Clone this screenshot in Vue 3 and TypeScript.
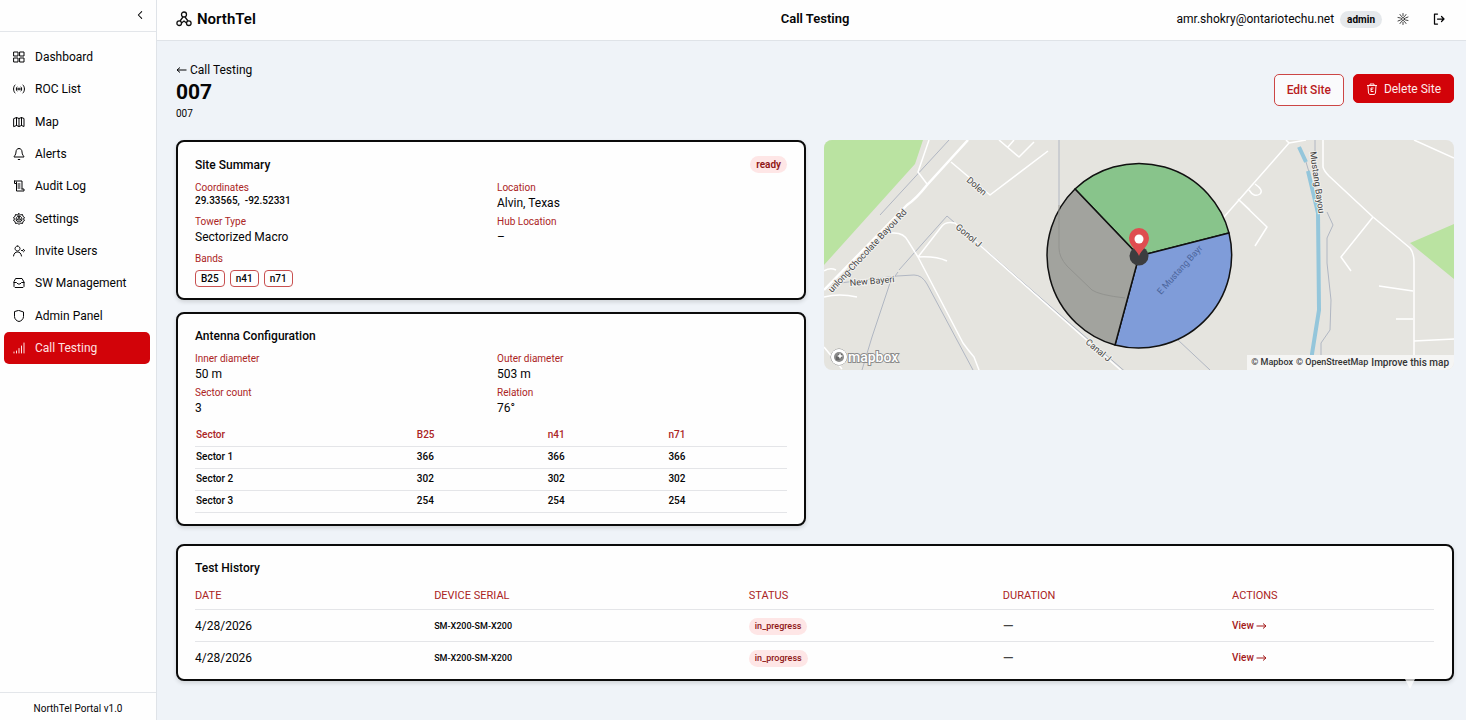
<script setup lang="ts">
interface NavItem {
  label: string
  icon: string
  active?: boolean
}

interface Field {
  label: string
  value: string
  mono?: boolean
}

interface TestRun {
  date: string
  serial: string
  status: string
  duration: string
}

// Icon outlines on a 24-unit grid.
const icons: Record<string, string> = {
  grid: 'M2 2h8v8H2zM14 2h8v8h-8zM2 14h8v8H2zM14 14h8v8h-8z',
  radio: 'M4 4c-4 4-4 12 0 16M20 4c4 4 4 12 0 16M8 8c-2 2-2 6 0 8M16 8c2 2 2 6 0 8M12 10v4M8 12h8',
  map: 'M2 5l5-2 5 2 5-2 5 2v16l-5-2-5 2-5-2-5 2zM7 3v16M12 5v16M17 3v16',
  bell: 'M12 1c-4 0-6 3-6 7 0 6-4 8-4 10h20c0-2-4-4-4-10 0-4-2-7-6-7zM10.500 23h3',
  log: 'M3 2h15v16M3 2v5h4M7 4v18h15v-4h-4M10 8h4M10 12h4M10 16h4',
  gear: 'M12 1l3 3 4-1 1 4 3 2-2 3 2 3-3 2-1 4-4-1-3 3-3-3-4 1-1-4-3-2 2-3-2-3 3-2 1-4 4 1zM12 6a6 6 0 1 0 .1 0M12 9.500a2.500 2.500 0 1 0 .1 0M12 6v3M7 15l3-2M17 15l-3-2',
  user: 'M9 2a5 5 0 1 0 .1 0M1 22c1-6 4-8 8-8s7 2 8 8M21 9a2 2 0 1 0 .1 0M17 11h2',
  drive: 'M6 3h12l4 7v9l-2 2H4l-2-2v-9zM2 11h5l3 3h4l3-3h5',
  shield: 'M12 1l9 3v9c0 5-4 9-9 10-5-1-9-5-9-10V4z',
  signal: 'M2 22v-2M7 22v-4M12 22v-9M17 22V8M22 22V2',
}

const navItems: NavItem[] = [
  { label: 'Dashboard', icon: 'grid' },
  { label: 'ROC List', icon: 'radio' },
  { label: 'Map', icon: 'map' },
  { label: 'Alerts', icon: 'bell' },
  { label: 'Audit Log', icon: 'log' },
  { label: 'Settings', icon: 'gear' },
  { label: 'Invite Users', icon: 'user' },
  { label: 'SW Management', icon: 'drive' },
  { label: 'Admin Panel', icon: 'shield' },
  { label: 'Call Testing', icon: 'signal', active: true },
]

const summary: Field[] = [
  { label: 'Coordinates', value: '29.33565,\u00a0 -92.52331', mono: true },
  { label: 'Location', value: 'Alvin, Texas' },
  { label: 'Tower Type', value: 'Sectorized Macro' },
  { label: 'Hub Location', value: '–' },
]

const antenna: Field[] = [
  { label: 'Inner diameter', value: '50 m' },
  { label: 'Outer diameter', value: '503 m' },
  { label: 'Sector count', value: '3' },
  { label: 'Relation', value: '76°' },
]

const bands: string[] = ['B25', 'n41', 'n71']
const sectors = [
  { name: 'Sector 1', pci: 366 },
  { name: 'Sector 2', pci: 302 },
  { name: 'Sector 3', pci: 254 },
]

const runs: TestRun[] = [
  { date: '4/28/2026', serial: 'SM-X200-SM-X200', status: 'in_pregress', duration: '—' },
  { date: '4/28/2026', serial: 'SM-X200-SM-X200', status: 'in_progress', duration: '—' },
]
</script>

<template>
  <div class="app">
    <aside class="sidebar">
      <div class="sidebar-top">
        <button class="icon-btn collapse" aria-label="Collapse sidebar">
          <svg class="icon" viewBox="0 0 24 24"><path d="M16 4l-8 8 8 8" stroke-width="2.500" /></svg>
        </button>
      </div>
      <nav class="nav" aria-label="Main">
        <a v-for="item in navItems" :key="item.label" href="#" class="nav-link" :class="{ active: item.active }">
          <svg class="icon" viewBox="0 0 24 24" aria-hidden="true"><path :d="icons[item.icon]" /></svg>
          <span>{{ item.label }}</span>
        </a>
      </nav>
      <footer class="sidebar-foot">NorthTel Portal v1.0</footer>
    </aside>

    <div class="page">
      <header class="topbar">
        <div class="brand">
          <svg class="brand-icon" viewBox="0 0 16 16" aria-hidden="true">
            <circle cx="8" cy="3.500" r="2.500" />
            <circle cx="3.200" cy="12.200" r="2.300" />
            <circle cx="12.800" cy="12.200" r="2.300" />
            <path d="M7 6l-3 4M9 6l3 4M5.500 12l2.500-2 2.500 2" />
          </svg>
          <span>NorthTel</span>
        </div>
        <h2 class="topbar-title">Call Testing</h2>
        <div class="account">
          <span class="email">amr.shokry@ontariotechu.net</span>
          <span class="role">admin</span>
          <button class="icon-btn sun" aria-label="Toggle theme">
            <svg class="icon" viewBox="0 0 24 24">
              <circle cx="12" cy="12" r="3" />
              <path d="M12 1v5M12 18v5M2 9l5 1M17 14l5 1M2 16l5-2M17 10l5-2M6 3l3 4M15 17l3 4M18 3l-3 4M9 17l-3 4" />
            </svg>
          </button>
          <button class="icon-btn logout" aria-label="Log out">
            <svg class="icon" viewBox="0 0 24 24"><path d="M9 2H3v20h6M9 12h13M17 7l5 5-5 5" stroke-width="2.500" /></svg>
          </button>
        </div>
      </header>

      <main class="content">
        <div class="page-head">
          <div>
            <a href="#" class="back"><svg class="arrow" viewBox="0 0 11 8" aria-hidden="true"><path d="M10.500 4H1M4 1.500L1 4l3 2.500" /></svg>Call Testing</a>
            <h1>007</h1>
            <p class="site-id">007</p>
          </div>
          <div class="actions">
            <button class="btn outline">Edit Site</button>
            <button class="btn solid">
              <svg class="trash" viewBox="0 0 24 24" aria-hidden="true">
                <path d="M2 5h20M8 5V2h8v3M4 5l1 15 2 3h10l2-3 1-15M15 10h-5v7h5M10 13h3" />
              </svg>
              Delete Site
            </button>
          </div>
        </div>

        <div class="columns">
          <div class="stack">
            <section class="card">
              <div class="card-head">
                <h3>Site Summary</h3>
                <span class="pill">ready</span>
              </div>
              <dl class="fields">
                <div v-for="f in summary" :key="f.label">
                  <dt>{{ f.label }}</dt>
                  <dd :class="{ mono: f.mono }">{{ f.value }}</dd>
                </div>
              </dl>
              <div class="bands">
                <div class="label">Bands</div>
                <div class="chips">
                  <span v-for="b in bands" :key="b" class="chip">{{ b }}</span>
                </div>
              </div>
            </section>

            <section class="card antenna">
              <div class="card-head"><h3>Antenna Configuration</h3></div>
              <dl class="fields">
                <div v-for="f in antenna" :key="f.label">
                  <dt>{{ f.label }}</dt>
                  <dd>{{ f.value }}</dd>
                </div>
              </dl>
              <table class="sectors">
                <thead>
                  <tr>
                    <th>Sector</th>
                    <th v-for="b in bands" :key="b">{{ b }}</th>
                  </tr>
                </thead>
                <tbody>
                  <tr v-for="s in sectors" :key="s.name">
                    <td>{{ s.name }}</td>
                    <td v-for="b in bands" :key="b">{{ s.pci }}</td>
                  </tr>
                </tbody>
              </table>
            </section>
          </div>

          <div class="map">
            <svg class="map-art" viewBox="0 0 630 230" preserveAspectRatio="xMidYMid slice" role="img" aria-label="Site coverage map">
              <rect width="630" height="230" fill="#e5e4df" />
              <path d="M0 0H99L91 24 0 125ZM586 103L630 84V139Z" fill="#bae3a1" />
              <g class="creek">
                <path d="M125 0L56 75M75 130L123 76 360 283M74 132L66 143 48 197 38 230" />
                <path d="M8 144L73 136 90 135Q98 135 103 144L149 230M235 0V65" />
                <path d="M354 200L386 230M482 22L485 32M491 0V12M503 72L509 85 503 98V123L507 160 506 190 497 203V222" />
              </g>
              <g class="road">
                <path d="M105 0L94 32 103 44M127 22L166 55 224 11M175 0L195 17 210 2M184 7L190 0" />
                <path d="M54 93H70Q80 93 84 101L94 117 139 203Q144 210 150 217L155 230" />
                <path d="M94 117L118 86Q122 81 131 83L240 180 300 233M94 117Q112 116 123 121" />
                <path d="M0 131Q6 127 12 130M0 157Q15 153 33 157M0 207L18 229" />
                <path d="M400 77L465 3 482 0M465 3L462 0M415 60L443 87 431 106M414 59L426 70M431 44Q440 50 436 54 430 58 425 50M499 0V27Q500 31 505 36L549 77 586 108Q590 113 590 122V222" />
                <path d="M549 77L517 117 527 131M555 146L589 151M572 179H589M590 201L630 199M590 0L630 18" />
              </g>
              <path d="M144 0L103 45Q92 59 83 65L0 150" class="main-road" />
              <path d="M475 7L482 22M484 31L494 73 495 170 488 214V222" class="river" />
              <g class="coverage">
                <path d="M315 116L251 49A93 93 0 0 1 405 93Z" fill="#88c48b" />
                <path d="M315 116L405 93A93 93 0 0 1 291 205Z" fill="#7f9cd9" />
                <path d="M315 116L291 205A93 93 0 0 1 251 49Z" fill="#a2a39e" />
              </g>
              <path d="M235 65V108Q235 117 243 126L268 150Q275 155 301 158" class="faint" />
              <g class="map-labels">
                <text x="142" y="41" transform="rotate(41 142 41)">Dolen</text>
                <text x="131" y="88" transform="rotate(40 131 88)">Gonol J</text>
                <text x="261" y="203" transform="rotate(40 261 203)">Canal J</text>
                <text x="26" y="146" transform="rotate(-5 26 146)">New Bayeri</text>
                <text x="8" y="153" transform="rotate(-47 8 153)">unlong-Chocolate Bayou Rd</text>
                <text x="486" y="12" transform="rotate(82 486 12)">Mustang Bayou</text>
                <text x="337" y="155" transform="rotate(-48 337 155)" class="on-blue">E Mustang Bayr</text>
              </g>
              <circle cx="315" cy="116" r="9.500" fill="#3c3d3f" />
              <path d="M315 116C313 110 305 106 305 98a10 10 0 0 1 20 0C325 106 317 110 315 116Z" fill="#df4d50" />
              <circle cx="315" cy="99" r="4.500" fill="#fff" />
            </svg>
            <a href="#" class="mapbox">
              <svg viewBox="0 0 18 18" aria-hidden="true">
                <circle cx="9" cy="9" r="8" fill="#fff" stroke="#888" />
                <circle cx="9" cy="9" r="5" fill="#8b8b8b" />
                <path d="M6 12c-1-5 3-7 6-6 1 4-2 7-6 6z" fill="#666" />
                <path d="M10 5l1 2 2 1-2 1-1 2-1-2-2-1 2-1z" fill="#fff" />
              </svg>
              <span>mapbox</span>
            </a>
            <div class="credits">
              <a href="#">© Mapbox</a>
              <a href="#">© OpenStreetMap</a>
              <a href="#" class="improve">Improve this map</a>
            </div>
          </div>
        </div>

        <section class="card history">
          <div class="card-head"><h3>Test History</h3></div>
          <table class="runs">
            <thead>
              <tr>
                <th>DATE</th>
                <th>DEVICE SERIAL</th>
                <th>STATUS</th>
                <th>DURATION</th>
                <th>ACTIONS</th>
              </tr>
            </thead>
            <tbody>
              <tr v-for="(r, i) in runs" :key="i">
                <td>{{ r.date }}</td>
                <td class="serial">{{ r.serial }}</td>
                <td><span class="pill status">{{ r.status }}</span></td>
                <td class="duration">{{ r.duration }}</td>
                <td><a href="#" class="view">View<svg class="arrow" viewBox="0 0 11 8" aria-hidden="true"><path d="M.5 4H10M7 1.500L10 4 7 6.500" /></svg></a></td>
              </tr>
            </tbody>
          </table>
          <span class="pointer" aria-hidden="true"></span>
        </section>
      </main>
    </div>
  </div>
</template>

<style>
body {
  margin: 0;
  background: #eff3f8;
}
</style>

<style scoped>
.app {
  display: grid;
  grid-template-columns: 157px 1fr;
  min-height: 100vh;
  background: #eff3f8;
  color: #050506;
  font: 400 12px/16px Roboto, "Liberation Sans", sans-serif;
}
.app *,
.app {
  box-sizing: border-box;
}
a {
  color: inherit;
  text-decoration: none;
}
h1, h2, h3, p, dl, dd {
  margin: 0;
}
button {
  font: inherit;
  color: inherit;
  cursor: pointer;
}
.icon {
  width: 12px;
  height: 12px;
  flex: none;
  fill: none;
  stroke: currentColor;
  stroke-width: 2;
  stroke-linecap: round;
  stroke-linejoin: round;
}
.icon-btn {
  display: grid;
  place-items: center;
  width: 30px;
  height: 30px;
  padding: 0;
  border: 0;
  background: none;
}

.sidebar {
  display: flex;
  flex-direction: column;
  background: #fefefe;
  border-right: 1px solid #dfe3e8;
}
.sidebar-top {
  display: flex;
  justify-content: flex-end;
  height: 32px;
  padding-right: 1px;
  border-bottom: 1px solid #e3e6ea;
}
.collapse .icon {
  width: 10px;
  height: 10px;
}
.nav {
  display: grid;
  grid-auto-rows: 1fr;
  min-height: 323px;
  padding: 0 6px 0 4px;
  margin-top: 9px;
}
.nav-link {
  display: flex;
  align-items: center;
  gap: 10px;
  padding: 0 9px;
  border-radius: 5px;
}
.nav-link.active {
  background: #d20309;
  color: #ffe2e2;
}
.sidebar-foot {
  margin-top: auto;
  padding: 8px 0 4px;
  border-top: 1px solid #e3e6ea;
  font-size: 10px;
  line-height: 15px;
  text-align: center;
}

.page {
  min-width: 0;
}
.topbar {
  display: grid;
  grid-template-columns: 1fr auto 1fr;
  align-items: center;
  height: 41px;
  padding: 0 12px 2px 19px;
  background: #fefefe;
  border-bottom: 1px solid #dfe3e8;
}
.brand {
  display: flex;
  align-items: center;
  gap: 5px;
  font-size: 15px;
  font-weight: 600;
}
.brand-icon {
  width: 16px;
  height: 16px;
  fill: none;
  stroke: #111;
  stroke-width: 1.3;
}
.topbar-title {
  font-size: 13px;
  font-weight: 600;
}
.account {
  display: flex;
  align-items: center;
  justify-content: flex-end;
}
.account .icon-btn {
  margin-left: 6px;
}
.sun .icon {
  stroke-width: 1.5;
}
.role {
  margin-left: 6px;
  padding: 0 7px;
  border-radius: 9px;
  background: #e5e8eb;
  font-size: 10px;
  font-weight: 700;
  line-height: 17px;
}

.content {
  padding: 21px 12px 20px 19px;
}
.page-head {
  display: flex;
  justify-content: space-between;
  margin-bottom: 19px;
}
.back {
  display: flex;
  align-items: center;
  gap: 3px;
}
.arrow {
  width: 11px;
  height: 8px;
  fill: none;
  stroke: currentColor;
}
h1 {
  font-size: 21px;
  font-weight: 700;
  line-height: 29px;
}
.site-id {
  font-size: 10px;
  line-height: 14px;
}
.actions {
  display: flex;
  align-items: flex-start;
  gap: 9px;
  padding-top: 12px;
}
.btn {
  display: flex;
  align-items: center;
  gap: 6px;
  padding: 0 12px;
  border: 1px solid #d20309;
  border-radius: 5px;
}
.outline {
  height: 32px;
  background: #fafafc;
  border-color: #cc4545;
  color: #b91c1c;
  font-weight: 500;
}
.solid {
  height: 29px;
  background: #d20309;
  color: #ffeaea;
}
.trash {
  width: 12px;
  height: 12px;
  fill: none;
  stroke: currentColor;
  stroke-width: 2;
}

.columns {
  display: grid;
  grid-template-columns: 1fr 1fr;
  gap: 18px;
  align-items: start;
  margin-bottom: 18px;
}
.stack {
  display: grid;
  gap: 12px;
}
.card {
  position: relative;
  padding: 14px 17px 11px;
  background: #fefefe;
  border: 2px solid #0b0b0b;
  border-radius: 8px;
  box-shadow: 0 2px 4px #0002;
}
.card-head {
  display: flex;
  justify-content: space-between;
  align-items: center;
  margin-bottom: 8px;
}
h3 {
  font-size: 12px;
  font-weight: 500;
}
.pill {
  padding: 0 6px;
  border-radius: 9px;
  background: #fee6e6;
  color: #8f1515;
  font-size: 10px;
  font-weight: 600;
  line-height: 17px;
}
.fields {
  display: grid;
  grid-template-columns: 1fr 1fr;
  gap: 4px 12px;
}
dt,
.label {
  color: #ab2424;
  font-size: 10px;
  line-height: 14px;
}
dd.mono {
  font-size: 10px;
  font-weight: 500;
  line-height: 12px;
}
.bands {
  margin-top: 7px;
}
.chips {
  display: flex;
  gap: 5px;
  margin-top: 4px;
}
.chip {
  padding: 0 5px;
  border: 1px solid #c85050;
  border-radius: 4px;
  font-size: 10px;
  font-weight: 500;
  line-height: 15px;
}

table {
  width: 100%;
  border-collapse: collapse;
  table-layout: fixed;
}
th,
td {
  padding: 0;
  border-bottom: 1px solid #e4e5e8;
  text-align: left;
}
.sectors {
  margin-top: 8px;
  font-size: 10px;
  font-weight: 500;
}
.sectors th,
.sectors td {
  height: 22px;
  padding-left: 1px;
}
.sectors th {
  color: #ab2424;
  font-weight: 500;
}
.sectors th:nth-child(1) { width: 37.3%; }
.sectors th:nth-child(2) { width: 22.1%; }
.sectors th:nth-child(3) { width: 20.4%; }

.history {
  padding: 14px 18px 5px 17px;
}
.runs th {
  height: 26px;
  color: #ab2424;
  font-size: 11px;
  font-weight: 400;
}
.runs th:nth-child(1) { width: 19.3%; }
.runs th:nth-child(2) { width: 25.4%; }
.runs th:nth-child(3) { width: 20.5%; }
.runs th:nth-child(4) { width: 18.5%; }
.runs td {
  height: 32px;
}
.runs tbody tr:last-child td {
  border-bottom: 0;
}
.runs .serial {
  font-size: 9px;
  font-weight: 500;
}
.runs .duration {
  color: #444;
  font-size: 14px;
}
.status {
  display: inline-block;
  font-size: 9px;
  font-weight: 500;
}
.view {
  display: inline-flex;
  align-items: center;
  gap: 2px;
  color: #a31818;
  font-size: 10px;
  font-weight: 500;
}
.pointer {
  position: absolute;
  right: 37px;
  bottom: -10px;
  border: 5px solid transparent;
  border-top: 10px solid #fffb;
  border-bottom: 0;
}

.map {
  position: relative;
  overflow: hidden;
  border-radius: 8px;
}
.map-art {
  display: block;
  width: 100%;
  min-height: 230px;
}
.creek path,
.faint {
  fill: none;
  stroke: #b0b6c2;
}
.faint {
  stroke: #92938f;
}
.road path,
.main-road {
  fill: none;
  stroke: #fff;
  stroke-width: 1.5;
  stroke-linejoin: round;
}
.main-road {
  stroke-width: 2.5;
}
.river {
  fill: none;
  stroke: #94c6db;
  stroke-width: 4;
}
.coverage path {
  stroke: #111;
  stroke-width: 1.5;
  stroke-linejoin: round;
}
.map-labels text {
  fill: #444;
  stroke: #f2f1ee;
  stroke-width: 2;
  paint-order: stroke;
  font-size: 9px;
}
.map-labels .on-blue {
  fill: #4c659c;
  stroke: none;
}
.mapbox {
  position: absolute;
  left: 6px;
  bottom: 4px;
  display: flex;
  align-items: center;
  color: #fff;
  font: 500 14px/18px Roboto, sans-serif;
  -webkit-text-stroke: 2px #8c8c8c;
  paint-order: stroke fill;
}
.mapbox svg {
  width: 18px;
  height: 18px;
}
.credits {
  position: absolute;
  right: 0;
  bottom: 0;
  display: flex;
  gap: 3px;
  padding: 0 5px 0 4px;
  background: #f5f5f4;
  color: #333;
  font-size: 9px;
  font-weight: 500;
  line-height: 15px;
}
.improve {
  font-size: 10px;
}
</style>
